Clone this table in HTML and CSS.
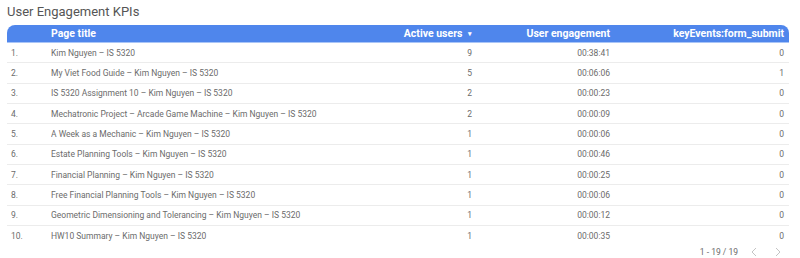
FILE: index.html
```html
<!DOCTYPE html>
<html lang="en">
<head>
  <meta charset="UTF-8" />
  <title>User Engagement KPIs</title>
  <link rel="stylesheet" href="styles.css">
</head>
<body>
  <div class="report">
    <h1 class="title">User Engagement KPIs</h1>
    <table class="kpi">
      <colgroup>
        <col class="c-num" />
        <col class="c-title" />
        <col class="c-users" />
        <col class="c-eng" />
        <col class="c-form" />
      </colgroup>
      <thead>
        <tr>
          <th></th>
          <th class="left">Page title</th>
          <th>Active users <span class="sort">&#9662;</span></th>
          <th>User engagement</th>
          <th>keyEvents:form_submit</th>
        </tr>
      </thead>
      <tbody>
        <tr><td class="num">1.</td><td class="left">Kim Nguyen – IS 5320</td><td>9</td><td>00:38:41</td><td>0</td></tr>
        <tr><td class="num">2.</td><td class="left">My Viet Food Guide – Kim Nguyen – IS 5320</td><td>5</td><td>00:06:06</td><td>1</td></tr>
        <tr><td class="num">3.</td><td class="left">IS 5320 Assignment 10 – Kim Nguyen – IS 5320</td><td>2</td><td>00:00:23</td><td>0</td></tr>
        <tr><td class="num">4.</td><td class="left">Mechatronic Project – Arcade Game Machine – Kim Nguyen – IS 5320</td><td>2</td><td>00:00:09</td><td>0</td></tr>
        <tr><td class="num">5.</td><td class="left">A Week as a Mechanic – Kim Nguyen – IS 5320</td><td>1</td><td>00:00:06</td><td>0</td></tr>
        <tr><td class="num">6.</td><td class="left">Estate Planning Tools – Kim Nguyen – IS 5320</td><td>1</td><td>00:00:46</td><td>0</td></tr>
        <tr><td class="num">7.</td><td class="left">Financial Planning – Kim Nguyen – IS 5320</td><td>1</td><td>00:00:25</td><td>0</td></tr>
        <tr><td class="num">8.</td><td class="left">Free Financial Planning Tools – Kim Nguyen – IS 5320</td><td>1</td><td>00:00:06</td><td>0</td></tr>
        <tr><td class="num">9.</td><td class="left">Geometric Dimensioning and Tolerancing – Kim Nguyen – IS 5320</td><td>1</td><td>00:00:12</td><td>0</td></tr>
        <tr class="last"><td class="num">10.</td><td class="left">HW10 Summary – Kim Nguyen – IS 5320</td><td>1</td><td>00:00:35</td><td>0</td></tr>
      </tbody>
    </table>
    <div class="pager">
      <span class="range">1 - 19 / 19</span>
      <svg class="arrow" width="8" height="10" viewBox="0 0 8 10"><path d="M6 1 L2 5 L6 9" fill="none" stroke="#c4c4c4" stroke-width="1"/></svg>
      <svg class="arrow" width="8" height="10" viewBox="0 0 8 10"><path d="M2 1 L6 5 L2 9" fill="none" stroke="#c4c4c4" stroke-width="1"/></svg>
    </div>
  </div>
</body>
</html>
```

FILE: styles.css
```css
body {
  margin: 0;
  background: #fff;
  font-family: Roboto, "Noto Sans", Arial, sans-serif;
  color: #5f6368;
}

.report {
  padding: 4px 11px 0 7px;
}

.title {
  margin: 0 0 6px 0;
  font-size: 13px;
  font-weight: 400;
  color: #555;
  line-height: 15px;
}

.kpi {
  width: 100%;
  border-collapse: separate;
  border-spacing: 0;
  table-layout: fixed;
  font-size: 8.5px;
}

.c-num { width: 44px; }
.c-users { width: 118px; }
.c-eng { width: 138px; }
.c-form { width: 174px; }

.kpi th {
  background: #4f86ec;
  color: #fff;
  font-weight: 700;
  font-size: 10.5px;
  height: 17px;
  padding: 0 5px 0 0;
  text-align: right;
  border-bottom: 1px solid #a9c5f7;
  white-space: nowrap;
}

.kpi th:first-child { border-top-left-radius: 8px; }
.kpi th:last-child { border-top-right-radius: 8px; }

.kpi th.left, .kpi td.left {
  text-align: left;
  padding-left: 0;
}

.sort {
  font-size: 7px;
  margin-left: 3px;
  vertical-align: 1px;
}

.kpi td {
  height: 19.33px;
  padding: 0 5px 0 0;
  text-align: right;
  border-bottom: 1px solid #ececec;
  color: #6b6b6b;
  white-space: nowrap;
  overflow: hidden;
}

.kpi td.num {
  text-align: left;
  padding-left: 4px;
}

.kpi tr.last td { border-bottom: none; }

.pager {
  display: flex;
  justify-content: flex-end;
  align-items: center;
  gap: 16px;
  font-size: 8.5px;
  color: #6b6b6b;
  height: 14px;
  padding-right: 7px;
}

.pager .range { margin-right: -4px; }
```
